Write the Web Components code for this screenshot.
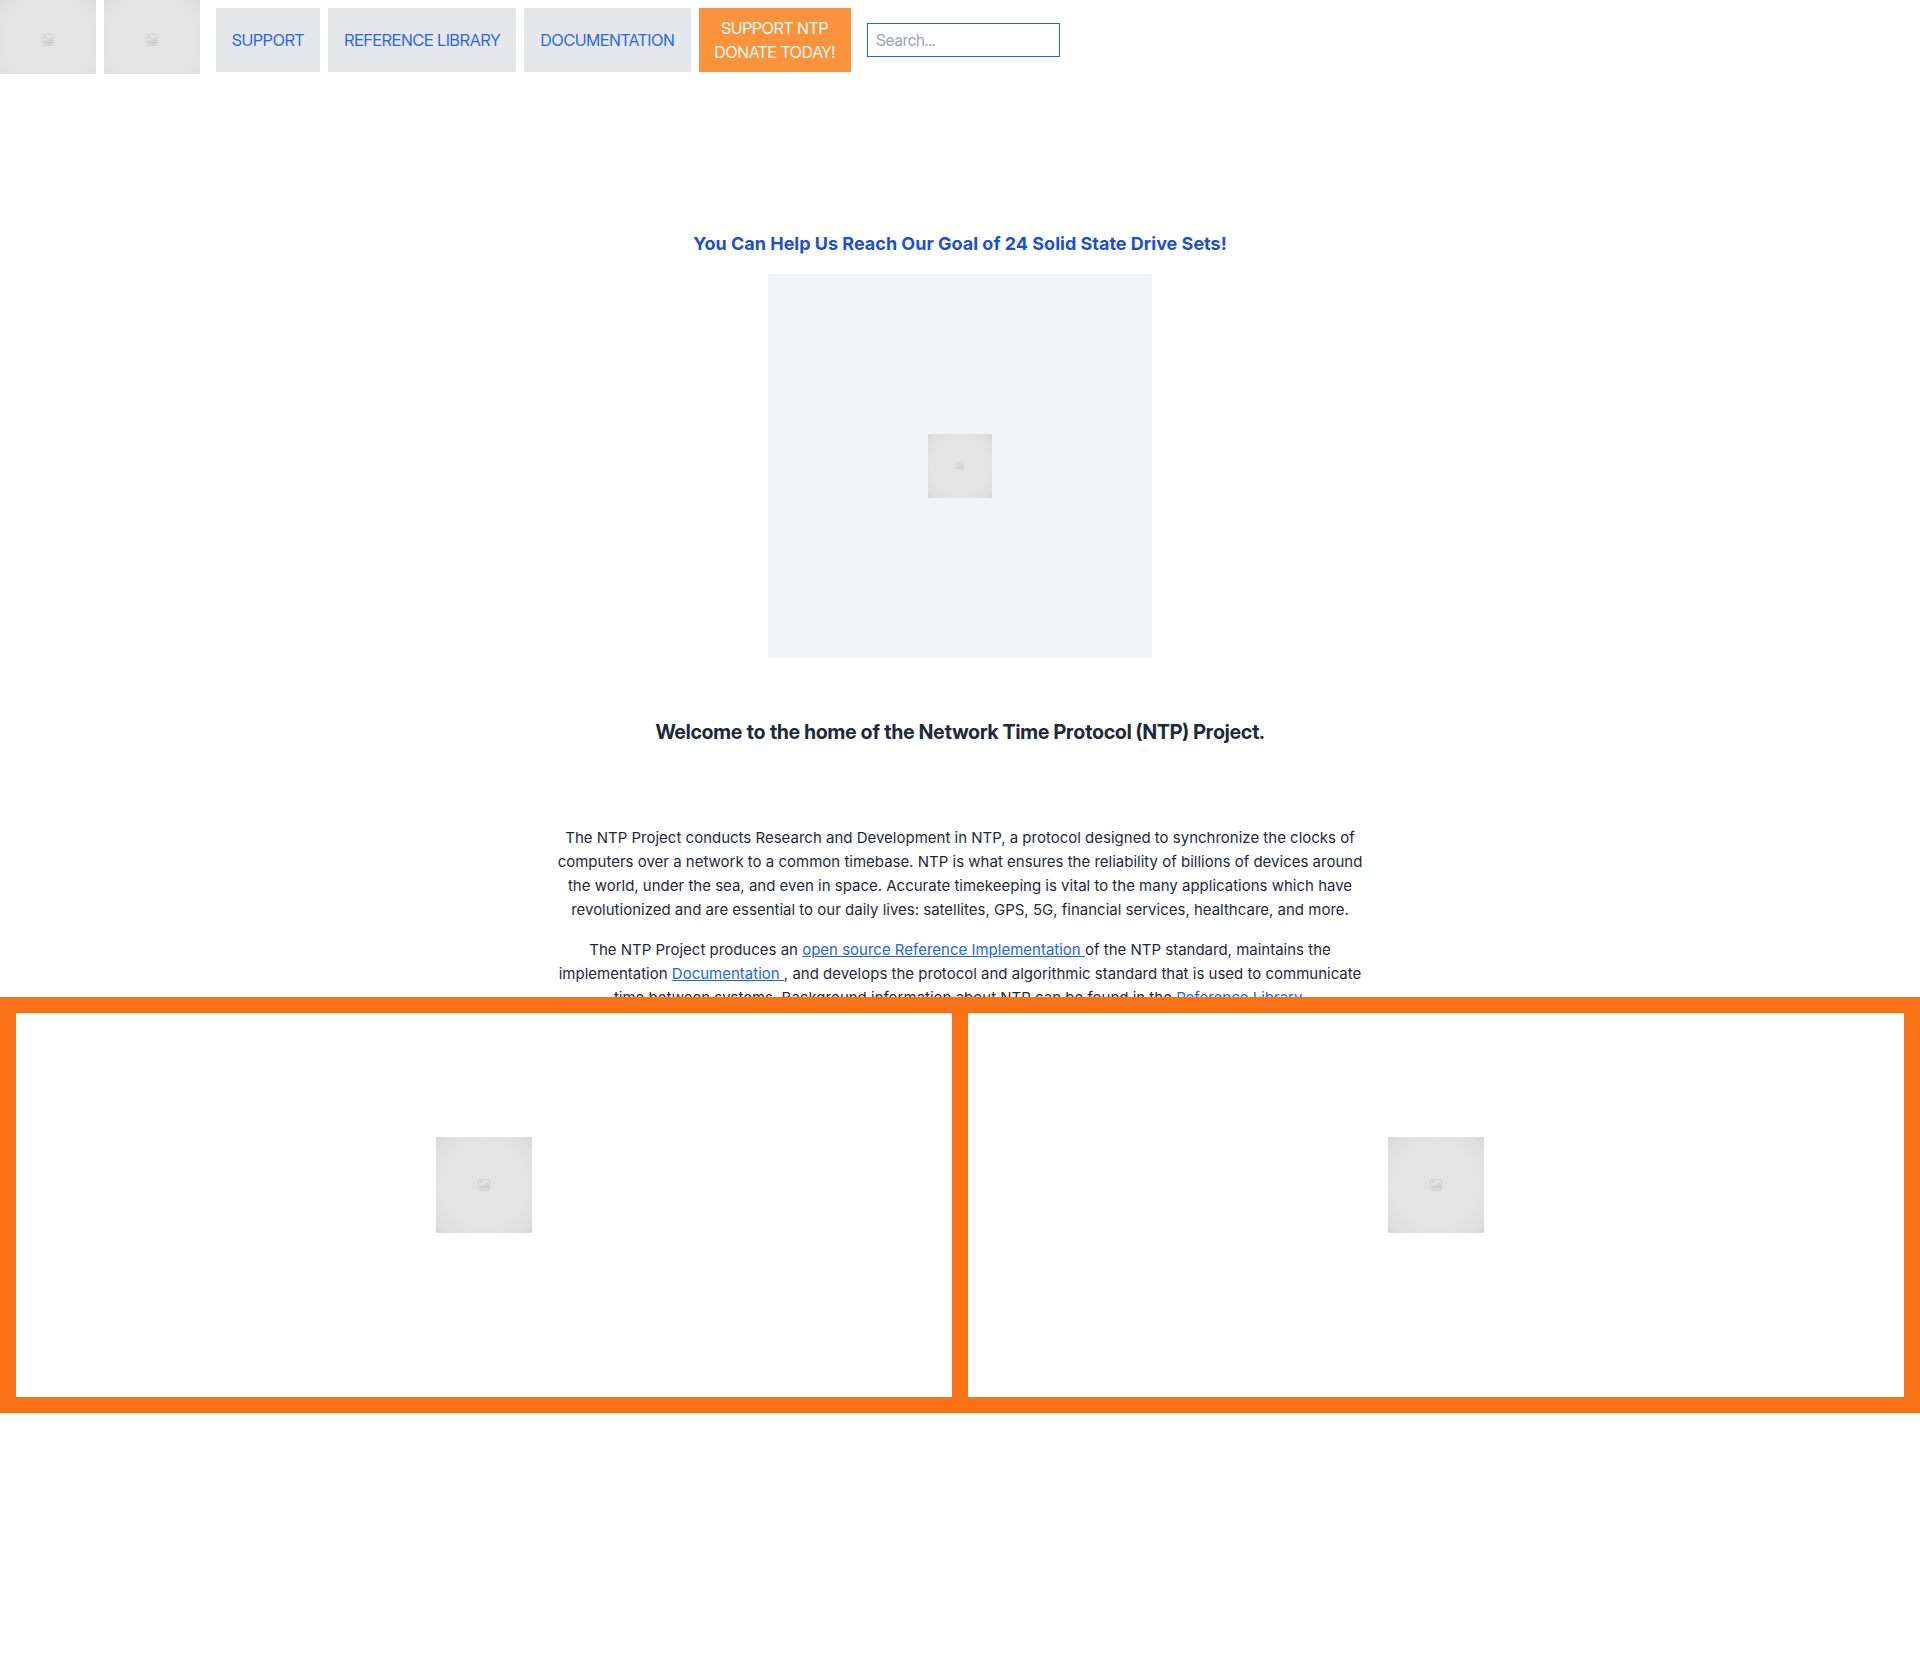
<!DOCTYPE html>
<html lang="en">
<head>
<meta charset="utf-8">
<meta name="viewport" content="width=device-width, initial-scale=1">
<title>Network Time Protocol (NTP) Project</title>
<style>
body { margin: 0; background: #fff; color: #1f2937; font: 16px/24px "Inter Display", Inter, "Liberation Sans", sans-serif; }
</style>
</head>
<body>
<ntp-page></ntp-page>

<template id="t-image">
<style>
:host { display: block; flex: none; width: 96px; height: 96px; }
:host([size="small"]) { width: 64px; height: 64px; }
:host([size="logo"]) { height: 74px; }
svg { display: block; width: 100%; height: 100%; }
</style>
<svg viewBox="0 0 96 96" preserveAspectRatio="xMidYMid slice" role="img" aria-label="Image placeholder">
<defs><radialGradient id="g" cx="50%" cy="50%" r="71%"><stop offset="0" stop-color="#e4e4e4"/><stop offset=".62" stop-color="#e4e4e4"/><stop offset=".85" stop-color="#dfdfdf"/><stop offset="1" stop-color="#d6d6d6"/></radialGradient></defs>
<rect width="96" height="96" fill="url(#g)"/>
<rect x="42.5" y="42.5" width="11" height="11" rx="1" fill="#e1e1e1" stroke="#d3d3d3"/>
<path d="M44 52v-2l3-2 1 1 2-3h1l2 3v3z" fill="#d1d1d1"/>
<rect x="44" y="44" width="2" height="2" fill="#d1d1d1"/>
</svg>
</template>

<template id="t-nav-link">
<style>
:host { display: flex; }
a { display: flex; align-items: center; padding: 8px 16px; background: #e5e7eb; color: #2563eb; text-align: center; text-decoration: none; white-space: nowrap; }
:host([donate]) a { background: #fb923c; color: #fff; }
</style>
<a href="#"><span><slot></slot></span></a>
</template>

<template id="t-header">
<style>
:host { display: flex; gap: 16px; height: 80px; }
.logos { display: flex; gap: 8px; }
nav { display: flex; gap: 8px; padding: 8px 0; }
label { display: flex; align-items: center; }
input { box-sizing: border-box; width: 193px; height: 34px; padding: 4px 8px; border: 1px solid #2563eb; border-radius: 0; background: #fff; color: inherit; font: inherit; }
input::placeholder { color: #9ca3af; opacity: 1; }
</style>
<div class="logos"><ntp-image size="logo"></ntp-image><ntp-image size="logo"></ntp-image></div>
<nav>
<nav-link>SUPPORT</nav-link>
<nav-link>REFERENCE LIBRARY</nav-link>
<nav-link>DOCUMENTATION</nav-link>
<nav-link donate>SUPPORT NTP<br>DONATE TODAY!</nav-link>
</nav>
<label><input type="search" placeholder="Search..." aria-label="Search"></label>
</template>

<template id="t-appeal">
<style>
:host { display: flex; flex-direction: column; align-items: center; gap: 16px; }
h2 { margin: 0; color: #1d4ed8; font: 700 18px/28px Inter, "Liberation Sans", sans-serif; }
.frame { display: flex; align-items: center; justify-content: center; width: 384px; aspect-ratio: 1; background: #f3f4f6; }
</style>
<h2><slot></slot></h2>
<div class="frame"><ntp-image size="small"></ntp-image></div>
</template>

<template id="t-intro">
<style>
:host { display: flex; flex-direction: column; align-items: center; gap: 80px; text-align: center; }
h1 { margin: 0; font-size: 20px; line-height: 28px; font-weight: 700; }
.text { max-width: 816px; max-height: 171px; overflow: hidden; font: 15px/24px Inter, "Liberation Sans", sans-serif; }
p { margin: 0 0 16px; }
a { color: #2563eb; text-decoration: underline; }
</style>
<h1>Welcome to the home of the Network Time Protocol (NTP) Project.</h1>
<div class="text">
<p>The NTP Project conducts Research and Development in NTP, a protocol designed to synchronize the clocks of computers over a network to a common timebase. NTP is what ensures the reliability of billions of devices around the world, under the sea, and even in space. Accurate timekeeping is vital to the many applications which have revolutionized and are essential to our daily lives: satellites, GPS, 5G, financial services, healthcare, and more.</p>
<p>The NTP Project produces an <a href="#">open source Reference Implementation </a>of the NTP standard, maintains the implementation <a href="#">Documentation </a>, and develops the protocol and algorithmic standard that is used to communicate time between systems. Background information about NTP can be found in the <a href="#">Reference Library.</a></p>
</div>
</template>

<template id="t-gallery">
<style>
:host { display: grid; grid-template-columns: 1fr 1fr; gap: 16px; padding: 16px; background: #f97316; }
div { display: flex; justify-content: center; padding: 124px 0 164px; background: #fff; }
</style>
<div><ntp-image></ntp-image></div>
<div><ntp-image></ntp-image></div>
</template>

<template id="t-page">
<style>
:host { display: block; }
main { display: flex; flex-direction: column; padding-top: 150px; gap: 60px; }
</style>
<header><ntp-header></ntp-header></header>
<main>
<ntp-appeal>You Can Help Us Reach Our Goal of 24 Solid State Drive Sets!</ntp-appeal>
<ntp-intro></ntp-intro>
</main>
<ntp-gallery></ntp-gallery>
</template>

<script>
function define(name, id, ready) {
  customElements.define(name, class extends HTMLElement {
    constructor() {
      super();
      this.attachShadow({ mode: "open" }).append(document.getElementById(id).content.cloneNode(true));
    }
    connectedCallback() { if (ready) ready(this); }
  });
}
define("ntp-image", "t-image", el => {
  // Logos show a shorter crop of the square picture.
  if (el.getAttribute("size") === "logo") el.shadowRoot.querySelector("svg").setAttribute("viewBox", "0 8 96 74");
});
define("nav-link", "t-nav-link");
define("ntp-header", "t-header");
define("ntp-appeal", "t-appeal");
define("ntp-intro", "t-intro");
define("ntp-gallery", "t-gallery");
define("ntp-page", "t-page");
</script>
</body>
</html>
